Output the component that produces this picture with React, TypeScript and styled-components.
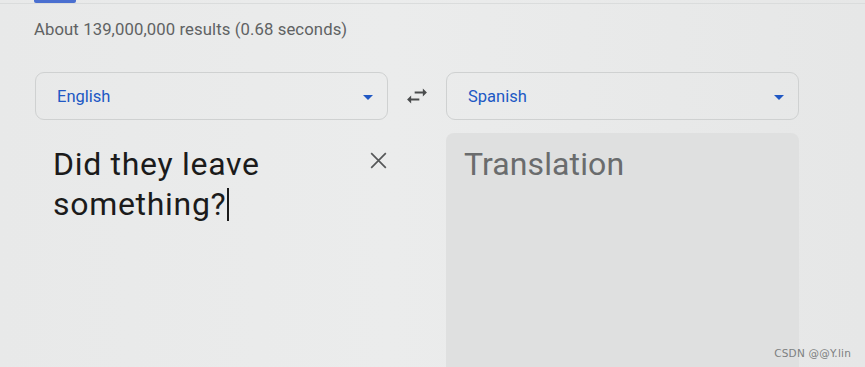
import styled, { createGlobalStyle } from "styled-components";

const GlobalStyle = createGlobalStyle`
  html, body {
    margin: 0;
    padding: 0;
    background: #e9eaea;
  }
  body {
    font-family: Roboto, "Open Sans", Arial, sans-serif;
    width: 865px;
    height: 367px;
    overflow: hidden;
  }
`;

const Page = styled.div`
  position: relative;
  width: 865px;
  height: 367px;
  background: linear-gradient(90deg, #e8e9e9 0%, #ebecec 45%, #e6e7e7 100%);
  overflow: hidden;
`;

const TopRule = styled.div`
  height: 3px;
  border-bottom: 1px solid #dadcdc;
  padding-left: 34px;
`;

const ActiveTab = styled.div`
  width: 42px;
  height: 3px;
  background: #4a6fd0;
  border-radius: 0 0 2px 2px;
`;

const Results = styled.div`
  padding: 15px 0 0 34px;
  font-size: 16.7px;
  color: #606263;
  letter-spacing: 0.1px;
  line-height: 22px;
`;

const Translator = styled.div`
  display: grid;
  grid-template-columns: 353px 58px 353px;
  grid-template-rows: 48px 1fr;
  row-gap: 13px;
  margin: 31px 0 0 35px;
  height: 296px;
`;

const LangSelect = styled.div`
  display: flex;
  align-items: center;
  justify-content: space-between;
  border: 1px solid #cfd1d1;
  border-radius: 9px;
  padding: 0 14px 0 21px;
  color: #2058c4;
  font-size: 16.5px;
  box-sizing: border-box;
`;

const Caret = styled.span`
  width: 0;
  height: 0;
  border-left: 5px solid transparent;
  border-right: 5px solid transparent;
  border-top: 5px solid #2058c4;
  margin-top: 2px;
`;

const SwapCell = styled.div`
  display: flex;
  align-items: center;
  justify-content: center;
  color: #4a4c4d;
`;

const SourcePane = styled.div`
  display: flex;
  justify-content: space-between;
  align-items: flex-start;
  padding: 11px 0 0 18px;
`;

const BigText = styled.div<{ $muted?: boolean }>`
  font-size: 32px;
  line-height: 40px;
  letter-spacing: ${(p) => (p.$muted ? "0.1px" : "0.7px")};
  color: ${(p) => (p.$muted ? "#6a6c6d" : "#1b1b1b")};
  width: 290px;
`;

const CaretBar = styled.span`
  display: inline-block;
  width: 2px;
  height: 33px;
  background: #1b1b1b;
  vertical-align: -6px;
  margin-left: 1px;
`;

const ClearButton = styled.button`
  border: 0;
  background: none;
  padding: 0;
  margin: 3px -4px 0 0;
  width: 27px;
  height: 27px;
  color: #555758;
  display: flex;
  align-items: center;
  justify-content: center;
`;

const TargetPane = styled.div`
  grid-column: 3;
  background: #dfe0e0;
  border-radius: 8px 8px 0 0;
  padding: 11px 0 0 18px;
  margin-bottom: -10px;
`;

const Watermark = styled.div`
  position: absolute;
  right: 14px;
  bottom: 8px;
  font-family: "DejaVu Sans", sans-serif;
  font-size: 10.5px;
  color: #7d7f80;
  letter-spacing: 0.2px;
`;

function SwapIcon() {
  return (
    <svg width="28" height="28" viewBox="0 0 24 24" fill="currentColor">
      <path d="M6.99 11.5 3.5 15l3.49 3.5v-2.6H14v-1.8H6.99v-2.6zM20.5 9l-3.49-3.5v2.6H10v1.8h7.01v2.6L20.5 9z" />
    </svg>
  );
}

function CloseIcon() {
  return (
    <svg width="27" height="27" viewBox="0 0 24 24" fill="none" stroke="currentColor" strokeWidth="1.5">
      <path d="M5.5 5.5l13 13M18.5 5.5l-13 13" />
    </svg>
  );
}

export default function App() {
  return (
    <>
      <GlobalStyle />
      <Page>
        <TopRule>
          <ActiveTab />
        </TopRule>
        <Results>About 139,000,000 results (0.68 seconds)</Results>
        <Translator>
          <LangSelect>
            English
            <Caret />
          </LangSelect>
          <SwapCell>
            <SwapIcon />
          </SwapCell>
          <LangSelect>
            Spanish
            <Caret />
          </LangSelect>
          <SourcePane>
            <BigText>
              Did they leave something?
              <CaretBar />
            </BigText>
            <ClearButton aria-label="Clear source text">
              <CloseIcon />
            </ClearButton>
          </SourcePane>
          <TargetPane>
            <BigText $muted>Translation</BigText>
          </TargetPane>
        </Translator>
        <Watermark>CSDN @@Y.lin</Watermark>
      </Page>
    </>
  );
}
